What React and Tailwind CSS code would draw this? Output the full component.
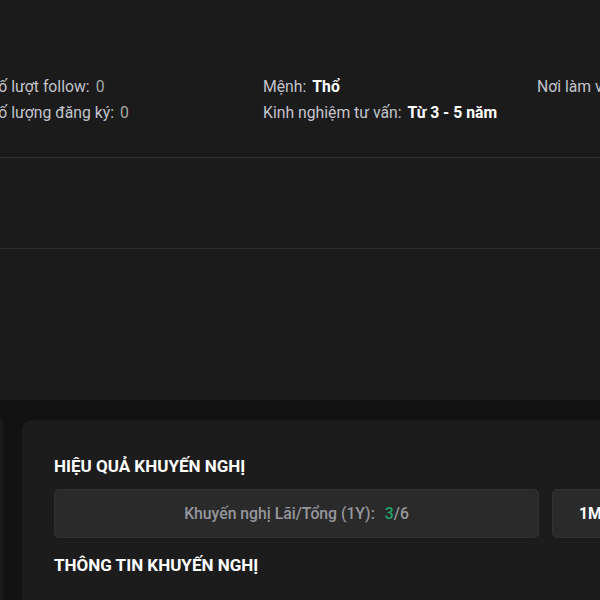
import React from 'react';

const info = [
  [
    { label: 'Số lượt follow:', value: '0' },
    { label: 'Số lượng đăng ký:', value: '0' },
  ],
  [
    { label: 'Mệnh:', value: 'Thổ', strong: true },
    { label: 'Kinh nghiệm tư vấn:', value: 'Từ 3 - 5 năm', strong: true },
  ],
  [
    { label: 'Nơi làm việc:', value: '' },
  ],
];

export default function App() {
  return (
    <div className="w-[600px] h-[600px] overflow-hidden bg-[#121212] font-['Roboto','Liberation_Sans',sans-serif]">
      <div className="bg-[#1b1b1b] h-[400px] pt-[77px]">
        <div className="flex -ml-[11px] w-[900px]">
          {info.map((col, i) => (
            <div key={i} className="w-[274px] flex flex-col gap-[6px]">
              {col.map((row) => (
                <div key={row.label} className="flex gap-[6px] text-[15.75px] leading-[20px] whitespace-nowrap">
                  <span className="text-[#c4c4cc]">{row.label}</span>
                  <span className={row.strong ? 'text-white font-bold' : 'text-[#a8a8a8]'}>{row.value}</span>
                </div>
              ))}
            </div>
          ))}
        </div>
        <div className="mt-[34px] border-t border-[#2f2f2f]" />
        <div className="mt-[90px] border-t border-[#2f2f2f]" />
      </div>

      <div className="flex gap-[19px] pt-[20px]">
        <div className="w-[3px] h-[200px] bg-[#1b1b1b] shrink-0" />
        <div className="flex-1 min-w-0 bg-[#1c1c1c] rounded-l-[10px] pt-[36px] pl-[32px]">
          <h2 className="text-white font-bold text-[17px] leading-[20px] uppercase">Hiệu quả khuyến nghị</h2>
          <div className="flex gap-[13px] mt-[13px]">
            <div className="w-[485px] shrink-0 h-[49px] rounded-[5px] bg-[#2a2a2a] border border-[#313131] flex items-center justify-center text-[15.75px] font-medium text-[#96969d]">
              <span>Khuyến nghị Lãi/Tổng (1Y):</span>
              <span className="ml-[10px] text-[#22a06b]">3</span>
              <span>/6</span>
            </div>
            <div className="w-[200px] shrink-0 h-[49px] rounded-[5px] bg-[#2a2a2a] border border-[#313131] flex items-center pl-[26px] text-[15.75px] font-bold text-white">
              1M
            </div>
          </div>
          <h2 className="mt-[17px] text-white font-bold text-[17px] leading-[20px] uppercase">Thông tin khuyến nghị</h2>
          <div className="mt-[26px] flex text-[14px] font-bold text-[#c4c4cc] uppercase whitespace-nowrap">
            <span className="w-[100px]">Mã CK</span>
            <span className="w-[140px]">Giá khuyến nghị</span>
            <span>Lãi/Lỗ</span>
          </div>
        </div>
      </div>
    </div>
  );
}
